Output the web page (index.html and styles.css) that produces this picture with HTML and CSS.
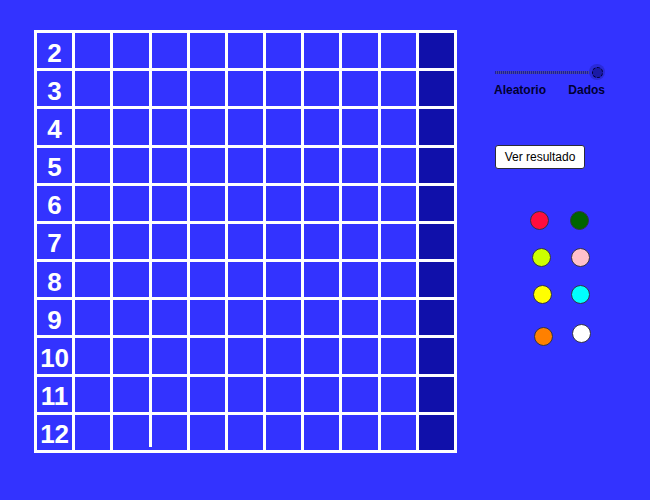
FILE: index.html
```html
<!DOCTYPE html>
<html lang="es">
<head>
<meta charset="utf-8">
<title>Suma de dados</title>
<link rel="stylesheet" href="styles.css">
</head>
<body>
<main class="app">
  <div class="board">
    <div class="cell num">2</div><div class="cell"></div><div class="cell"></div><div class="cell"></div><div class="cell"></div><div class="cell"></div><div class="cell"></div><div class="cell"></div><div class="cell"></div><div class="cell"></div><div class="cell dark"></div>
    <div class="cell num">3</div><div class="cell"></div><div class="cell"></div><div class="cell"></div><div class="cell"></div><div class="cell"></div><div class="cell"></div><div class="cell"></div><div class="cell"></div><div class="cell"></div><div class="cell dark"></div>
    <div class="cell num">4</div><div class="cell"></div><div class="cell"></div><div class="cell"></div><div class="cell"></div><div class="cell"></div><div class="cell"></div><div class="cell"></div><div class="cell"></div><div class="cell"></div><div class="cell dark"></div>
    <div class="cell num">5</div><div class="cell"></div><div class="cell"></div><div class="cell"></div><div class="cell"></div><div class="cell"></div><div class="cell"></div><div class="cell"></div><div class="cell"></div><div class="cell"></div><div class="cell dark"></div>
    <div class="cell num">6</div><div class="cell"></div><div class="cell"></div><div class="cell"></div><div class="cell"></div><div class="cell"></div><div class="cell"></div><div class="cell"></div><div class="cell"></div><div class="cell"></div><div class="cell dark"></div>
    <div class="cell num">7</div><div class="cell"></div><div class="cell"></div><div class="cell"></div><div class="cell"></div><div class="cell"></div><div class="cell"></div><div class="cell"></div><div class="cell"></div><div class="cell"></div><div class="cell dark"></div>
    <div class="cell num">8</div><div class="cell"></div><div class="cell"></div><div class="cell"></div><div class="cell"></div><div class="cell"></div><div class="cell"></div><div class="cell"></div><div class="cell"></div><div class="cell"></div><div class="cell dark"></div>
    <div class="cell num">9</div><div class="cell"></div><div class="cell"></div><div class="cell"></div><div class="cell"></div><div class="cell"></div><div class="cell"></div><div class="cell"></div><div class="cell"></div><div class="cell"></div><div class="cell dark"></div>
    <div class="cell num">10</div><div class="cell"></div><div class="cell"></div><div class="cell"></div><div class="cell"></div><div class="cell"></div><div class="cell"></div><div class="cell"></div><div class="cell"></div><div class="cell"></div><div class="cell dark"></div>
    <div class="cell num">11</div><div class="cell"></div><div class="cell"></div><div class="cell"></div><div class="cell"></div><div class="cell"></div><div class="cell"></div><div class="cell"></div><div class="cell"></div><div class="cell"></div><div class="cell dark"></div>
    <div class="cell num">12</div><div class="cell"></div><div class="cell notch"></div><div class="cell"></div><div class="cell"></div><div class="cell"></div><div class="cell"></div><div class="cell"></div><div class="cell"></div><div class="cell"></div><div class="cell dark"></div>
  </div>

  <aside class="side">
    <div class="slider">
      <div class="track"></div>
      <div class="knob"><span class="knob-core"></span></div>
    </div>
    <div class="slider-labels">
      <span>Aleatorio</span>
      <span>Dados</span>
    </div>
    <button class="btn" type="button">Ver resultado</button>
    <div class="dots">
      <span class="dot red"></span>
      <span class="dot green"></span>
      <span class="dot lime"></span>
      <span class="dot pink"></span>
      <span class="dot yellow"></span>
      <span class="dot cyan"></span>
      <span class="dot orange"></span>
      <span class="dot white"></span>
    </div>
  </aside>
</main>
</body>
</html>
```

FILE: styles.css
```css
* {
  box-sizing: border-box;
}

html,
body {
  margin: 0;
  height: 100%;
  background: #3333ff;
  font-family: "Liberation Sans", Arial, sans-serif;
}

.app {
  display: flex;
  align-items: flex-start;
  padding: 30px 0 0 34px;
}

/* 11 x 11 tally board; the white background shows through the gaps as grid lines */
.board {
  display: grid;
  grid-template-columns: repeat(11, 1fr);
  grid-template-rows: repeat(11, 1fr);
  gap: 3px;
  padding: 3px;
  width: 423px;
  height: 423px;
  background: #ffffff;
}

.cell {
  background: #3333ff;
  position: relative;
}

.cell.dark {
  background: #1010aa;
}

.cell.num {
  display: flex;
  align-items: center;
  justify-content: center;
  padding-top: 4px;
  color: #ffffff;
  font-weight: bold;
  font-size: 26px;
  line-height: 1;
}

/* the divider after this cell stops just short of the bottom edge */
.cell.notch::after {
  content: "";
  position: absolute;
  right: -3px;
  bottom: 0;
  width: 3px;
  height: 3px;
  background: #3333ff;
}

.side {
  display: flex;
  flex-direction: column;
  align-items: flex-start;
  margin-left: 37px;
  width: 115px;
}

.slider {
  position: relative;
  margin-top: 34px;
  margin-left: 1px;
  width: 109px;
  height: 16px;
  display: flex;
  align-items: center;
}

.track {
  width: 100%;
  height: 3px;
  background: repeating-linear-gradient(90deg, #1c1ca0 0 1px, #4a4a9c 1px 2px);
}

.knob {
  position: absolute;
  right: -1px;
  top: 0;
  width: 16px;
  height: 16px;
  border-radius: 50%;
  background: #2a2ad8;
  display: flex;
  align-items: center;
  justify-content: center;
}

.knob-core {
  width: 11px;
  height: 11px;
  border-radius: 50%;
  background: #1a1aa6;
  border: 1px dashed #000033;
}

.slider-labels {
  display: flex;
  justify-content: space-between;
  width: 111px;
  margin-top: 3px;
  font-size: 12px;
  font-weight: bold;
  line-height: 14px;
  color: #000033;
}

.btn {
  margin-top: 48px;
  margin-left: 1px;
  width: 90px;
  height: 24px;
  padding: 0;
  border: 1px solid #2a2a3a;
  border-radius: 3px;
  background: #ffffff;
  color: #000000;
  font-family: "Liberation Sans", Arial, sans-serif;
  font-size: 12px;
}

/* colour swatches sit as free points on the applet canvas */
.dots {
  position: relative;
  margin-top: 41px;
  width: 115px;
  height: 140px;
}

.dot {
  position: absolute;
  width: 19px;
  height: 19px;
  border-radius: 50%;
  border: 1px solid #333344;
}

.dot.red    { left: 36px; top: 1px;   background: #ff0d3d; }
.dot.green  { left: 76px; top: 1px;   background: #006400; }
.dot.lime   { left: 38px; top: 38px;  background: #ccff00; }
.dot.pink   { left: 77px; top: 38px;  background: #ffc0cb; }
.dot.yellow { left: 39px; top: 75px;  background: #ffff00; }
.dot.cyan   { left: 77px; top: 75px;  background: #00ffff; }
.dot.orange { left: 40px; top: 117px; background: #ff8000; }
.dot.white  { left: 78px; top: 114px; background: #ffffff; }
```
